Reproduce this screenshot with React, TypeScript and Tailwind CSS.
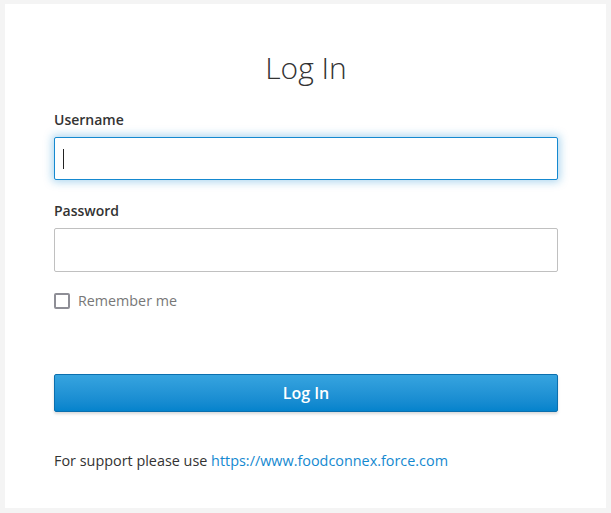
export default function App() {
  return (
    <div className="min-h-[513px] bg-[#f4f4f4] px-[5px] pt-[4px] pb-[5px] font-['Open_Sans',sans-serif]">
      <div className="h-[504px] bg-white pr-[48px] pl-[49px] pt-[44px]">
        <h1 className="text-center text-[30px] leading-[40px] font-light text-[#333]">Log In</h1>

        <form className="mt-[22px]" onSubmit={(e) => e.preventDefault()}>
          <label htmlFor="username" className="block text-[14px] leading-[20px] font-semibold text-[#333]">
            Username
          </label>
          <div className="mt-[7px] flex h-[43px] items-center rounded-[2px] border border-[#1589d0] bg-white px-[8px] shadow-[0_0_8px_2px_rgba(21,137,208,0.35)]">
            <span className="h-[20px] w-px bg-[#222]" />
          </div>

          <label htmlFor="password" className="mt-[21px] block text-[14px] leading-[20px] font-semibold text-[#333]">
            Password
          </label>
          <input
            id="password"
            type="password"
            className="mt-[7px] block h-[44px] w-full rounded-[2px] border border-[#c0c0c0] bg-white px-3 text-[14px] outline-none"
          />

          <label className="mt-[19px] flex h-[20px] items-center gap-[8px] text-[14.3px] text-[#777]">
            <span className="h-[16px] w-[16px] rounded-[2px] border-2 border-[#8e8e96] bg-white" />
            Remember me
          </label>

          <button
            type="submit"
            className="mt-[63px] flex h-[38px] w-full items-center justify-center rounded-[2px] border border-[#0b6fae] bg-gradient-to-b from-[#36a4df] to-[#0483cc] text-[16px] font-semibold text-white shadow-[0_2px_3px_rgba(0,0,0,0.15)]"
          >
            Log In
          </button>
        </form>

        <p className="mt-[39px] text-[14.4px] leading-[20px] text-[#333]">
          For support please use{' '}
          <a href="#" className="text-[#1589d0]">
            https://www.foodconnex.force.com
          </a>
        </p>
      </div>
    </div>
  );
}
